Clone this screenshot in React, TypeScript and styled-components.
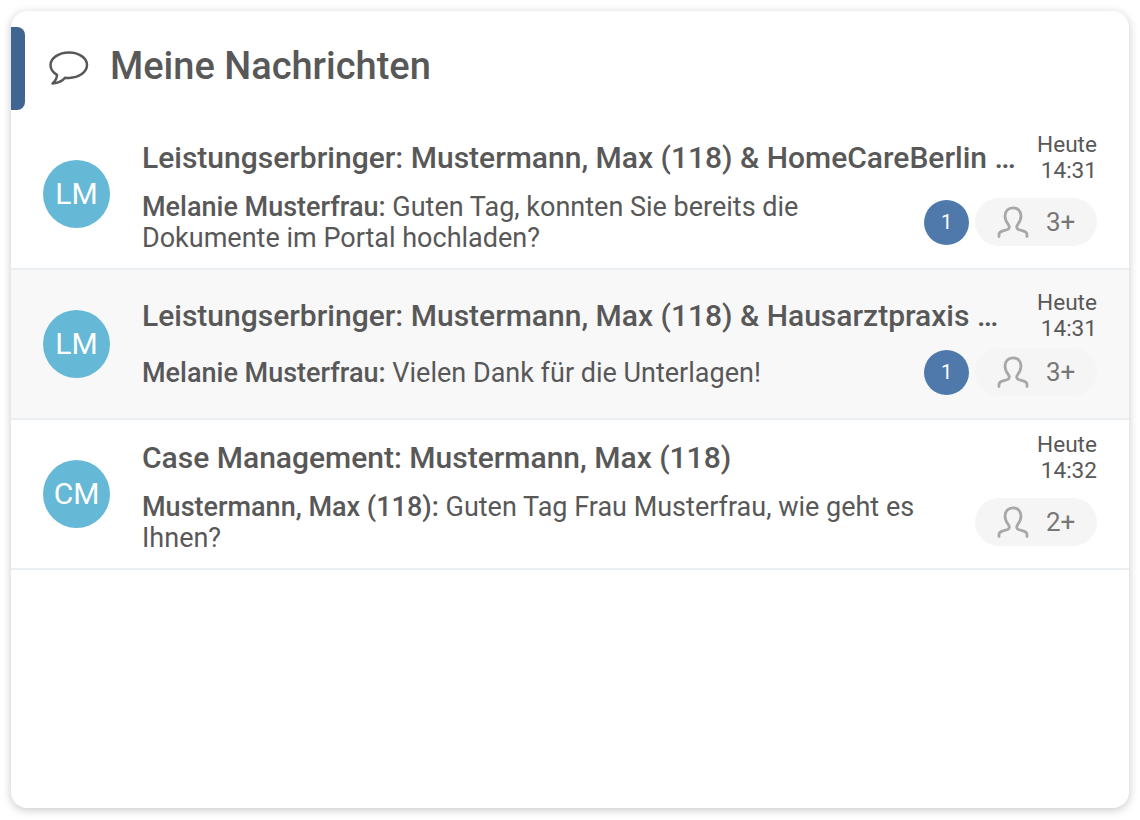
import React from 'react'
import styled, { createGlobalStyle } from 'styled-components'

const GlobalStyle = createGlobalStyle`
  html, body {
    margin: 0;
    padding: 0;
    background: #fff;
    font-family: Roboto, "Liberation Sans", sans-serif;
    color: #585858;
  }
`

const Page = styled.div`
  padding: 11px;
  box-sizing: border-box;
  width: 1140px;
  height: 820px;
  overflow: hidden;
`

const Card = styled.section`
  height: 797px;
  background: #fff;
  border-radius: 16px;
  box-shadow: 0 2px 10px rgba(0, 0, 0, 0.22);
  overflow: hidden;
`

const Header = styled.header`
  display: flex;
  align-items: flex-start;
  height: 109px;
  padding-top: 16px;
  box-sizing: border-box;
`

const Accent = styled.div`
  width: 14px;
  height: 83px;
  background: #3f6590;
  border-radius: 0 8px 8px 0;
`

const HeaderIcon = styled.svg`
  width: 40px;
  height: 36px;
  margin: 24px 0 0 24px;
  color: #585858;
`

const Heading = styled.h1`
  margin: 15px 0 0 21px;
  font-size: 38px;
  line-height: 48px;
  font-weight: 500;
  color: #585858;
`

const Row = styled.article<{ $shaded?: boolean }>`
  display: flex;
  align-items: center;
  height: 150px;
  box-sizing: border-box;
  padding: 0 32px;
  border-bottom: 2px solid #eceff1;
  background: ${p => (p.$shaded ? '#f8f8f8' : '#fff')};
`

const Avatar = styled.div`
  flex: none;
  width: 67px;
  height: 68px;
  border-radius: 50%;
  background: #65b8d6;
  color: #fff;
  font-size: 30px;
  line-height: 68px;
  text-align: center;
`

const Main = styled.div`
  flex: 1;
  min-width: 0;
  margin-left: 32px;
  padding-bottom: 3px;
  display: flex;
  flex-direction: column;
  gap: 8px;
`

const TopLine = styled.div`
  display: flex;
  align-items: center;
  gap: 16px;
  padding-top: 1px;
`

const Title = styled.h2`
  flex: 1;
  min-width: 0;
  margin: 0;
  font-size: 30px;
  line-height: 40px;
  font-weight: 500;
  color: #585858;
  white-space: nowrap;
  overflow: hidden;
  text-overflow: ellipsis;
`

const Time = styled.div`
  flex: none;
  width: 60px;
  font-size: 22.6px;
  line-height: 26px;
  text-align: right;
  color: #585858;
`

const BottomLine = styled.div`
  display: flex;
  align-items: center;
`

const Message = styled.p`
  flex: 1;
  min-width: 0;
  margin: 0;
  font-size: 27px;
  line-height: 31px;
  color: #585858;
`

const Sender = styled.strong`
  font-weight: 500;
`

const Meta = styled.div`
  flex: none;
  width: 173px;
  margin-top: -2px;
  display: flex;
  align-items: center;
  justify-content: flex-end;
  gap: 6px;
`

const Badge = styled.span`
  width: 45px;
  height: 45px;
  border-radius: 50%;
  background: #5079ab;
  color: #fff;
  font-size: 20px;
  line-height: 45px;
  text-align: center;
`

const Members = styled.div`
  width: 122px;
  height: 48px;
  box-sizing: border-box;
  padding-left: 22px;
  display: flex;
  align-items: center;
  gap: 17px;
  border-radius: 24px;
  background: #f5f5f5;
  color: #777;
  font-size: 26px;
`

const PersonIcon = styled.svg`
  width: 32px;
  height: 32px;
  color: #a8a8a8;
`

const ChatBubble = () => (
  <HeaderIcon viewBox="0 0 40 36" fill="none" stroke="currentColor" strokeWidth="2.5" strokeLinejoin="round">
    <path d="M20 1.500C10 1.500 1.500 7 1.500 14C1.500 18 4 21.500 8 23.800C8 27 6.500 30 3.500 32.500C8.500 32 13.500 30 16 26.700C17.300 26.800 18.600 26.900 20 26.900C30 26.900 38 21 38 14C38 7 30 1.500 20 1.500Z" />
  </HeaderIcon>
)

const Person = () => (
  <PersonIcon viewBox="0 0 32 32" fill="none" stroke="currentColor" strokeWidth="2.8" strokeLinecap="round">
    <path d="M2 30.500V28.500C2 26.500 3.500 25.500 6 24.800L10.500 23.500C12.500 22.800 12.800 20.500 11.500 18.800C9.500 16.300 8 13.500 8 10C8 5 11.500 1.800 16 1.800C20.500 1.800 24 5 24 10C24 13.500 22.500 16.300 20.500 18.800C19.200 20.500 19.500 22.800 21.500 23.500L26 24.800C28.500 25.500 30 26.500 30 28.500V30.500" />
  </PersonIcon>
)

type Conversation = {
  initials: string
  title: string
  time: string
  sender: string
  text: string
  unread?: number
  members: string
  shaded?: boolean
}

const conversations: Conversation[] = [
  {
    initials: 'LM',
    title: 'Leistungserbringer: Mustermann, Max (118) & HomeCareBerlin GmbH Versorgung',
    time: '14:31',
    sender: 'Melanie Musterfrau:',
    text: 'Guten Tag, konnten Sie bereits die Dokumente im Portal hochladen?',
    unread: 1,
    members: '3+',
  },
  {
    initials: 'LM',
    title: 'Leistungserbringer: Mustermann, Max (118) & Hausarztpraxis Musterstadt',
    time: '14:31',
    sender: 'Melanie Musterfrau:',
    text: 'Vielen Dank für die Unterlagen!',
    unread: 1,
    members: '3+',
    shaded: true,
  },
  {
    initials: 'CM',
    title: 'Case Management: Mustermann, Max (118)',
    time: '14:32',
    sender: 'Mustermann, Max (118):',
    text: 'Guten Tag Frau Musterfrau, wie geht es Ihnen?',
    members: '2+',
  },
]

const App: React.FC = () => {
  return (
    <Page>
      <GlobalStyle />
      <Card>
        <Header>
          <Accent />
          <ChatBubble />
          <Heading>Meine Nachrichten</Heading>
        </Header>
        {conversations.map((c, i) => (
          <Row key={i} $shaded={c.shaded}>
            <Avatar>{c.initials}</Avatar>
            <Main>
              <TopLine>
                <Title>{c.title}</Title>
                <Time>Heute<br />{c.time}</Time>
              </TopLine>
              <BottomLine>
                <Message><Sender>{c.sender}</Sender> {c.text}</Message>
                <Meta>
                  {c.unread && <Badge>{c.unread}</Badge>}
                  <Members><Person />{c.members}</Members>
                </Meta>
              </BottomLine>
            </Main>
          </Row>
        ))}
      </Card>
    </Page>
  )
}

export default App
